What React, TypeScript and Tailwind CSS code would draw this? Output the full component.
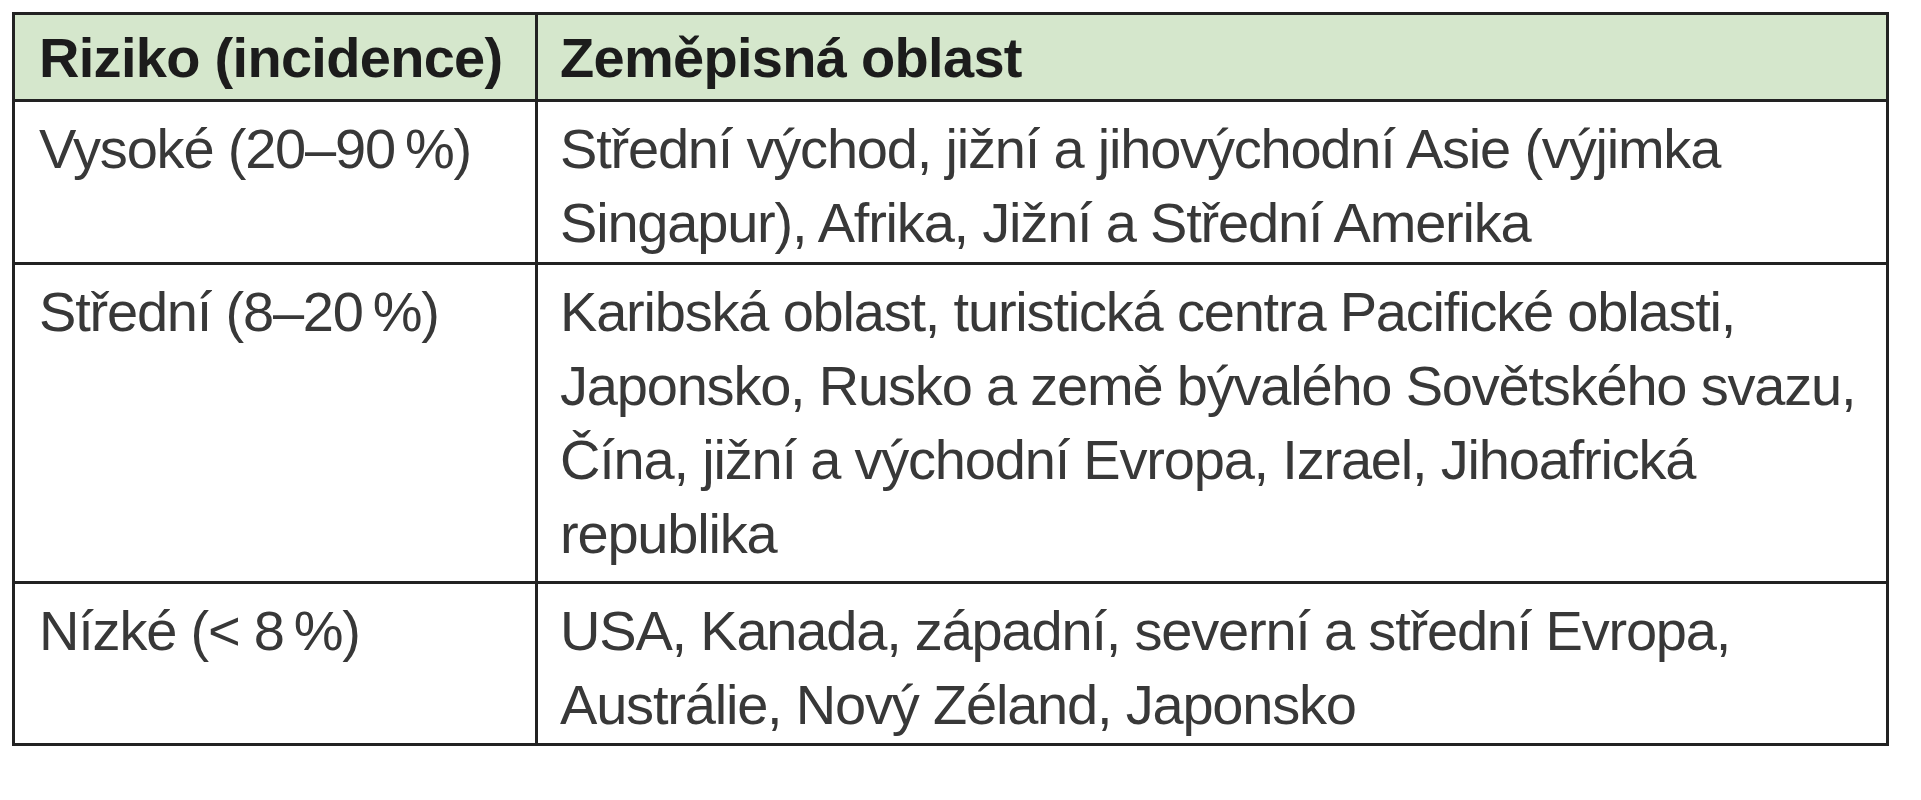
const rows = [
  {
    risk: "Vysoké (20–90\u202F%)",
    lines: ["Střední východ, jižní a jihovýchodní Asie (výjimka", "Singapur), Afrika, Jižní a Střední Amerika"],
    height: "h-[163px]",
  },
  {
    risk: "Střední (8–20\u202F%)",
    lines: [
      "Karibská oblast, turistická centra Pacifické oblasti,",
      "Japonsko, Rusko a země bývalého Sovětského svazu,",
      "Čína, jižní a východní Evropa, Izrael, Jihoafrická",
      "republika",
    ],
    height: "h-[319px]",
  },
  {
    risk: "Nízké (< 8\u202F%)",
    lines: ["USA, Kanada, západní, severní a střední Evropa,", "Austrálie, Nový Zéland, Japonsko"],
    height: "h-[162px]",
  },
];

export default function App() {
  return (
    <div className="min-h-screen bg-white pt-3 pl-3 font-['Liberation_Sans',Arial,sans-serif] text-[56px] leading-[74px]">
      <div className="w-[1877px] border-[3px] border-[#222]">
        <div className="flex h-[84px] bg-[#d5e7cc] font-bold text-[#1c1c1c] tracking-[-0.7px]">
          <div className="w-[523px] shrink-0 border-r-[3px] border-[#222] pl-6 pt-[6px] whitespace-nowrap">Riziko (incidence)</div>
          <div className="flex-1 pl-[22px] pt-[6px] whitespace-nowrap">Zeměpisná oblast</div>
        </div>
        {rows.map((row) => (
          <div key={row.risk} className={`flex border-t-[3px] border-[#222] text-[#383838] tracking-[-1.2px] ${row.height}`}>
            <div className="w-[523px] shrink-0 border-r-[3px] border-[#222] pl-6 pt-[10px] whitespace-nowrap">{row.risk}</div>
            <div className="flex-1 pl-[22px] pt-[10px]">
              {row.lines.map((line) => (
                <div key={line} className="whitespace-nowrap">{line}</div>
              ))}
            </div>
          </div>
        ))}
      </div>
    </div>
  );
}
